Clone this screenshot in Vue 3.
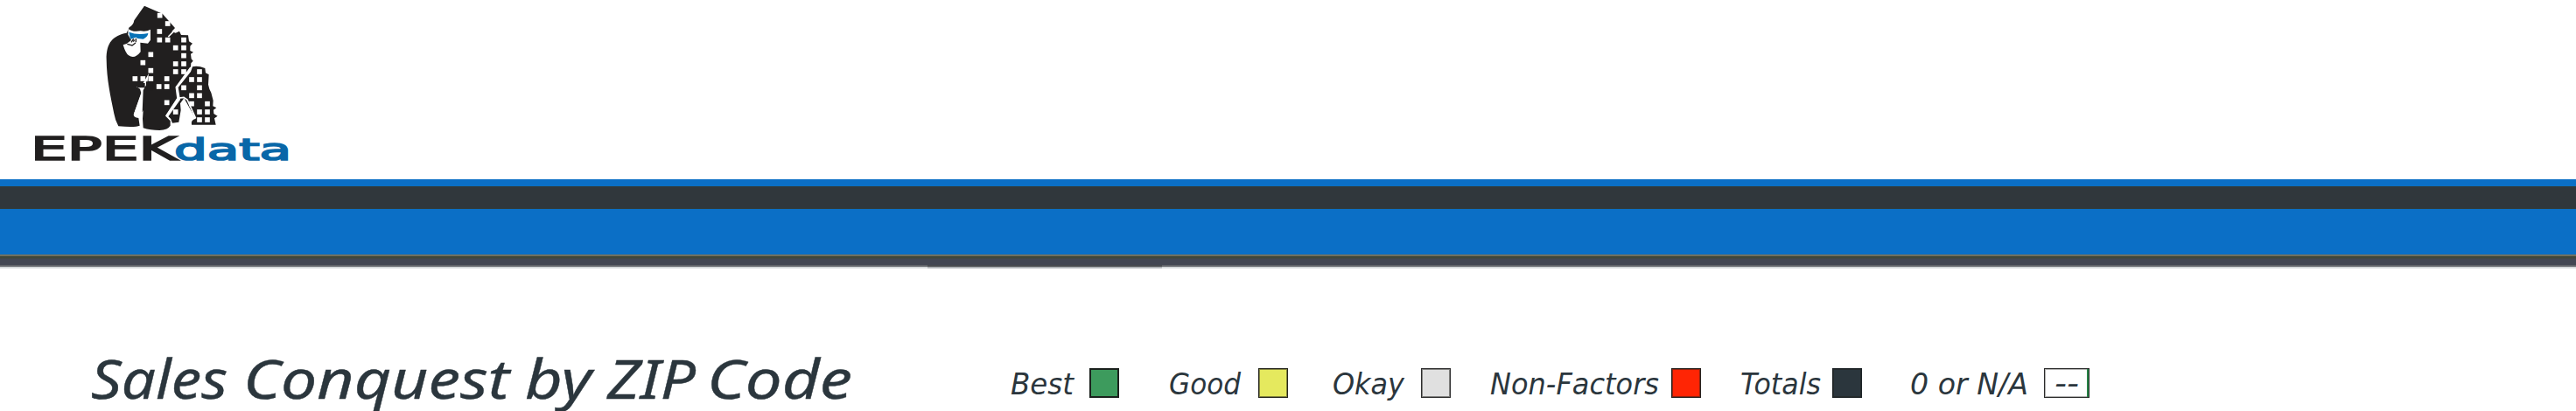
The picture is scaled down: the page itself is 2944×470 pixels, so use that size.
<script setup>
const legend = [
  { label: 'Best', width: 72, gap: 18, after: 57, color: '#3d9b5d', edge: '#1b211d', heavy: true },
  { label: 'Good', width: 82, gap: 20, after: 51, color: '#e5e95e', edge: '#24241c' },
  { label: 'Okay', width: 82, gap: 19, after: 45, color: '#e0e0e0', edge: '#2d2d2d' },
  { label: 'Non-Factors', width: 193, gap: 14, after: 45, color: '#ff2504', edge: '#24211e' },
  { label: 'Totals', width: 92, gap: 13, after: 55, color: '#2b363d', edge: '#1c2225' },
  { label: '0 or N/A', width: 135, gap: 18, after: 0, color: '#ffffff', edge: '#2b2b2b', dashes: true },
]
const title = [
  { text: 'Sales', x: 3, w: 156 },
  { text: 'Conquest', x: 177, w: 304 },
  { text: 'by', x: 499, w: 76 },
  { text: 'ZIP', x: 593, w: 101 },
  { text: 'Code', x: 707, w: 166 },
]
const windows = [
  [248, 53], [275, 81], [247, 108], [247, 137], [275, 137], [330, 137],
  [302, 164], [330, 164], [217, 187], [330, 191], [190, 215], [302, 219],
  [330, 219], [217, 242], [302, 246], [330, 246], [163, 270], [190, 270],
  [217, 270], [272, 270], [245, 297], [272, 297], [272, 352], [302, 384],
  [357, 273], [384, 246], [384, 273], [330, 301], [384, 301], [357, 328],
  [384, 328], [357, 356], [411, 356], [384, 384], [411, 384], [384, 411], [411, 411],
]
</script>

<template>
  <main class="page">
    <header class="brand">
      <svg class="mascot" viewBox="0 0 510 465" aria-hidden="true">
        <path fill="#211f1f" d="M195 20L257 47L300 96L289 108L302 113L315 107L321 120L345 121L348 142L360 149L352 158L352 174L363 179L354 185L356 202L362 209L355 217L354 230L305 300L310 334L270 395L284 415L284 431Q276 445 247 447Q215 447 191 439L189 407L197 290L181 330L158 393Q158 403 175 405L179 431Q164 438 106 433Q94 410 91 390C78 325 66 274 65 205C64 145 88 122 134 113L143 94Q158 85 160 70Z" />
        <path fill="#211f1f" d="M360 229Q376 223 403 234L405 250L416 256L414 290Q417 306 424 318L431 345L430 364L442 370L432 377L433 390L446 398L435 406L440 428L357 428Q353 411 371 407L331 337L318 355L320 378L313 419L291 422L285 407L277 400L318 342L311 300L354 246Z" />
        <path d="M277 126L296 107M354 231L304 299L309 337L330 334L342 342L371 406M309 337L270 397L285 412" fill="none" stroke="#fff" stroke-width="5" />
        <path fill="#fff" d="M139 98Q153 111 182 106Q201 110 216 101L216 137L207 149L181 146L182 178Q161 205 141 190Q131 184 122 154L134 150L150 138L139 119Z" />
        <path fill="#0872b7" d="M142 110Q171 121 208 114Q207 126 191 134L172 132L166 128L148 134Q145 127 142 110Z" />
        <path d="M150 145L158 133M166 132V145M136 151L153 156L165 147M157 143L161 137" fill="none" stroke="#211f1f" stroke-width="4" />
        <path fill="#fff" d="M210 252L205 284L188 365Q182 390 173 400Q158 397 160 388L184 319L180 305L168 298L189 289Z" />
        <path fill="#211f1f" d="M170 285H197V301H170ZM201 280H224V310H201ZM191 310L207 281L196 371L188 385Z" />
        <rect v-for="([x, y], i) in windows" :key="i" :x="x - 8.5" :y="y - 8.5" width="17" height="17" fill="#fff" />
      </svg>
      <svg class="wordmark" viewBox="0 0 300 40">
        <text class="epek" x="-5" y="32.5" textLength="167" lengthAdjust="spacingAndGlyphs">EPEK</text>
        <text class="data" x="159" y="32.5" textLength="134" lengthAdjust="spacingAndGlyphs">data</text>
      </svg>
    </header>
    <div class="bands">
      <div class="thin"></div>
      <div class="dark"></div>
      <div class="blue"></div>
      <div class="rim"></div>
      <div class="slate"></div>
      <div class="base"><span></span></div>
      <div class="soft"><span></span></div>
    </div>
    <section class="heading">
      <svg class="title" width="900" height="80">
        <text v-for="w in title" :key="w.text" :x="w.x" y="66" :textLength="w.w" lengthAdjust="spacingAndGlyphs">{{ w.text }}</text>
      </svg>
      <div class="legend">
        <template v-for="item in legend" :key="item.label">
          <svg class="label" :width="item.width" height="34">
            <text x="0" y="30" :textLength="item.width" lengthAdjust="spacingAndGlyphs">{{ item.label }}</text>
          </svg>
          <span class="swatch" :class="{ wide: item.dashes, heavy: item.heavy }" :style="{ background: item.color, borderColor: item.edge, marginLeft: item.gap + 'px', marginRight: item.after + 'px' }">
            <svg v-if="item.dashes" width="48" height="30"><text x="11" y="28" textLength="28" lengthAdjust="spacingAndGlyphs">--</text></svg>
          </span>
        </template>
      </div>
    </section>
  </main>
</template>

<style>
body { background: #fff; }
</style>

<style scoped>
.page { width: 2944px; height: 470px; overflow: hidden; background: #fff; }
.brand { height: 205px; display: flex; flex-direction: column; }
.mascot { display: block; width: 170px; height: 155px; margin-left: 100px; flex: none; }
.wordmark { display: block; width: 300px; height: 40px; margin: -5px 0 0 40px; overflow: visible; }
.epek, .data { font-family: "DejaVu Sans", sans-serif; font-size: 38px; stroke-width: 1.7px; }
.epek { fill: #211f1f; stroke: #211f1f; }
.data { font-size: 34px; fill: #0867a8; stroke: #0867a8; }
.thin { height: 8px; background: #0b6fc6; }
.dark { box-sizing: border-box; height: 26px; background: #30373c; border-top: 1px solid #303d3c; border-bottom: 1px solid #303d3c; }
.blue { height: 52px; background: #0b6fc6; }
.rim { height: 2px; background: #71705f; }
.slate { height: 10px; background: linear-gradient(#40473a 0 2px, #434753 3px); }
.base { height: 2px; background: #606369; }
.soft { height: 2px; background: #d5d8da; }
.base span, .soft span { display: block; width: 268px; height: 2px; margin-left: 1060px; background: #484b50; }
.soft span { background: #afb3b6; }
.heading { height: 163px; display: flex; align-items: flex-start; }
.title { display: block; flex: none; margin: 83px 0 0 101px; overflow: visible; }
.title text { font: italic 400 62px "Noto Sans", "Open Sans", sans-serif; fill: #2b363d; stroke: #2b363d; stroke-width: 0.4px; }
.legend { display: flex; align-items: flex-start; margin: 114px 0 0 154px; }
.label { display: block; overflow: visible; flex: none; }
.legend text { font: italic 400 33px "DejaVu Sans", Verdana, sans-serif; fill: #2b363d; }
.swatch { box-sizing: border-box; flex: none; width: 34px; height: 34px; border: 1px solid; box-shadow: inset 0 0 0 1px rgba(30, 30, 25, 0.5); }
.swatch.heavy { border-width: 2px; box-shadow: none; }
.swatch.wide { width: 52px; box-shadow: inset -2px 0 #278447, inset 0 0 0 1px rgba(30, 30, 25, 0.35); }
.swatch svg { display: block; overflow: visible; }
</style>
